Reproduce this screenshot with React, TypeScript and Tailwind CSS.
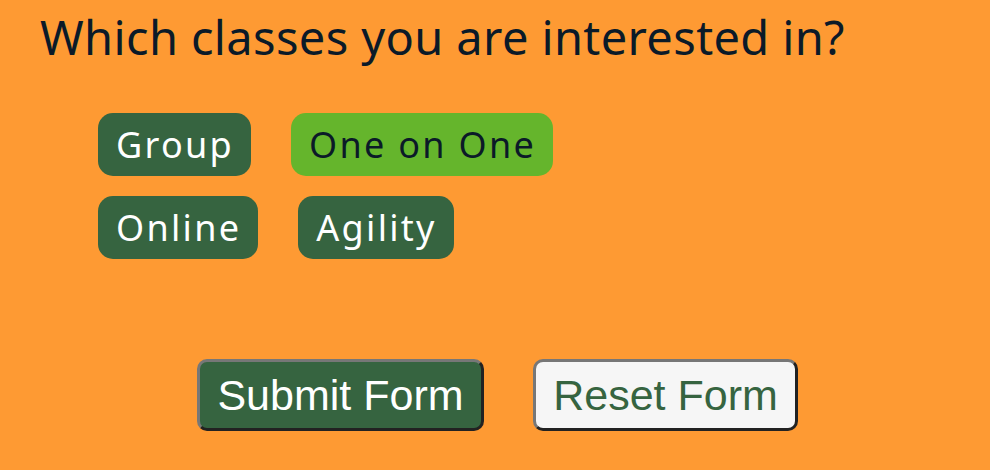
const classes = [
  { label: 'Group', selected: false },
  { label: 'One on One', selected: true },
  { label: 'Online', selected: false },
  { label: 'Agility', selected: false },
]

export default function App() {
  return (
    <div className="w-[990px] h-[470px] bg-[#fe9a33] overflow-hidden" style={{ fontFamily: '"Noto Sans", sans-serif' }}>
      <h2 className="pl-[40px] pt-[9px] text-[47px] leading-[56px] tracking-[0.37px] text-[#0b1a28]">
        Which classes you are interested in?
      </h2>
      <div className="mt-[48px] ml-[98px] w-[520px] flex flex-wrap gap-x-[40px] gap-y-[20px]">
        {classes.map((item) => (
          <button
            key={item.label}
            className={
              item.selected
                ? 'h-[63px] pl-[18px] pr-[17px] rounded-[15px] bg-[#65b52c] text-[#0b1a28] text-[36px] tracking-[2.3px] leading-none'
                : 'h-[63px] pl-[18px] pr-[17px] rounded-[15px] bg-[#366440] text-white text-[36px] tracking-[2.3px] leading-none'
            }
          >
            {item.label}
          </button>
        ))}
      </div>
      <div className="mt-[100px] pl-[5px] flex justify-center gap-[49px]" style={{ fontFamily: '"Liberation Sans", Arial, sans-serif' }}>
        <button className="w-[287px] h-[72px] rounded-[10px] border-[3px] border-t-[#777] border-l-[#777] border-r-[#222] border-b-[#222] bg-[#366440] text-white text-[43px] leading-none">
          Submit Form
        </button>
        <button className="w-[265px] h-[72px] rounded-[10px] border-[3px] border-t-[#777] border-l-[#777] border-r-[#222] border-b-[#222] bg-[#f6f6f6] text-[#366440] text-[43px] leading-none">
          Reset Form
        </button>
      </div>
    </div>
  )
}
